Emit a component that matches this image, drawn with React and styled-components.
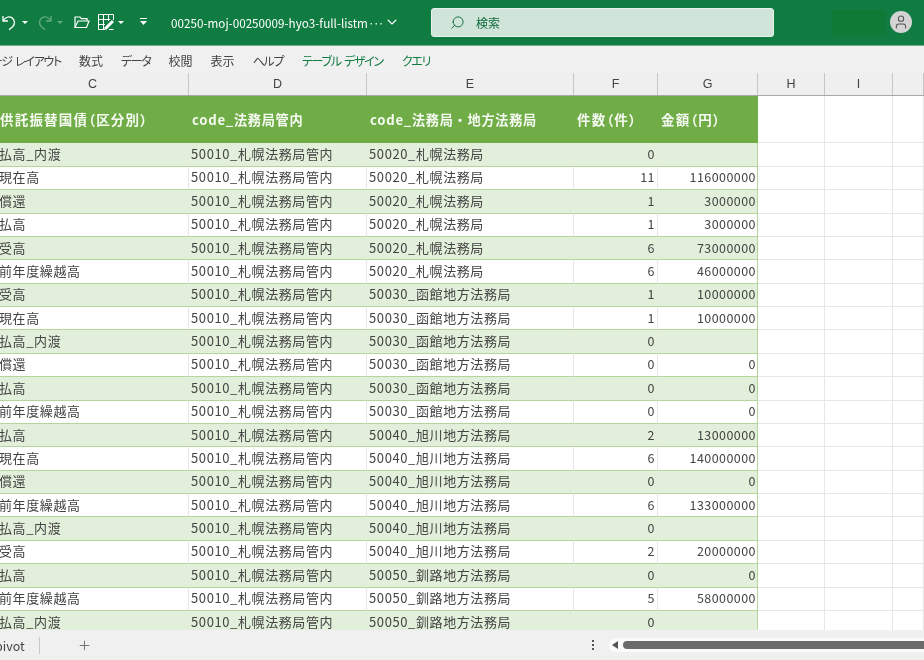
import React from 'react'
import styled, { createGlobalStyle } from 'styled-components';
import { ChevronDown, Plus, Search, User } from 'lucide-react';

const COLUMNS = '192px 178px 207px 84px 100px 67px 68px 1fr';
const ROW_HEIGHT = 23.38;

const OFFICE = '50010_札幌法務局管内';
const SAPPORO = '50020_札幌法務局';
const HAKODATE = '50030_函館地方法務局';
const ASAHIKAWA = '50040_旭川地方法務局';
const KUSHIRO = '50050_釧路地方法務局';

const rows = [
    ['払高_内渡', SAPPORO, '0', ''],
    ['現在高', SAPPORO, '11', '116000000'],
    ['償還', SAPPORO, '1', '3000000'],
    ['払高', SAPPORO, '1', '3000000'],
    ['受高', SAPPORO, '6', '73000000'],
    ['前年度繰越高', SAPPORO, '6', '46000000'],
    ['受高', HAKODATE, '1', '10000000'],
    ['現在高', HAKODATE, '1', '10000000'],
    ['払高_内渡', HAKODATE, '0', ''],
    ['償還', HAKODATE, '0', '0'],
    ['払高', HAKODATE, '0', '0'],
    ['前年度繰越高', HAKODATE, '0', '0'],
    ['払高', ASAHIKAWA, '2', '13000000'],
    ['現在高', ASAHIKAWA, '6', '140000000'],
    ['償還', ASAHIKAWA, '0', '0'],
    ['前年度繰越高', ASAHIKAWA, '6', '133000000'],
    ['払高_内渡', ASAHIKAWA, '0', ''],
    ['受高', ASAHIKAWA, '2', '20000000'],
    ['払高', KUSHIRO, '0', '0'],
    ['前年度繰越高', KUSHIRO, '5', '58000000'],
    ['払高_内渡', KUSHIRO, '0', ''],
];

const tabs = [
    { label: 'ページ レイアウト', kana: true },
    { label: '数式' },
    { label: 'データ', kana: true },
    { label: '校閲' },
    { label: '表示' },
    { label: 'ヘルプ', kana: true },
    { label: 'テーブル デザイン', kana: true, accent: true },
    { label: 'クエリ', kana: true, accent: true },
];

const App = () => (
    <Window>
        <GlobalStyle />
        <TitleBar>
            <QuickAccess>
                <svg width="17" height="18" viewBox="0 0 17 18" fill="none" stroke="currentColor" strokeWidth="1.3">
                    <path d="M2 3 V8 H7" />
                    <path d="M2.3 7.8 C4 4.2 8 3 10.8 4.6 C14 6.6 14.4 11.2 11.6 13.8 L8 16.8" />
                </svg>
                <Caret />
                <FadedIcon>
                    <svg width="17" height="18" viewBox="0 0 17 18" fill="none" stroke="currentColor" strokeWidth="1.3">
                        <path d="M15 3 V8 H10" />
                        <path d="M14.7 7.8 C13 4.2 9 3 6.2 4.6 C3 6.6 2.6 11.2 5.4 13.8 L9 16.8" />
                    </svg>
                    <Caret />
                </FadedIcon>
                <FolderSlot>
                    <svg width="16" height="14" viewBox="0 0 16 14" fill="none" stroke="currentColor" strokeWidth="1.2">
                        <path d="M1 12.5 V2 H6 L7.5 3.6 H13 V6" />
                        <path d="M1 12.5 L4 6 H15 L12.5 12.5 Z" />
                    </svg>
                </FolderSlot>
                <FormatSlot>
                    <svg width="16" height="16" viewBox="0 0 16 16" fill="none" stroke="currentColor">
                        <path d="M.5 .5 H15.5 V6 M.5 .5 V15.5 H7 M.5 5.5 H12 M.5 10.5 H7 M5.5 .5 V15.5 M10.5 .5 V7" strokeWidth="1" />
                        <path d="M7 15 L15 7" strokeWidth="3" />
                        <path d="M11 15.5 H15.5" strokeWidth="1" />
                    </svg>
                    <Caret />
                </FormatSlot>
                <CustomizeSlot>
                    <svg width="9" height="8" viewBox="0 0 9 8" fill="currentColor">
                        <rect x="1" y="0" width="7" height="1" />
                        <path d="M1 3 H8 L4.5 7 Z" />
                    </svg>
                </CustomizeSlot>
            </QuickAccess>
            <FileName>
                <span>00250-moj-00250009-hyo3-full-listm<Ellipsis>···</Ellipsis></span>
                <ChevronDown size={16} strokeWidth={1.6} />
            </FileName>
            <SearchBox>
                <MirroredSearch size={15} strokeWidth={1.5} />
                <span>検索</span>
            </SearchBox>
            <AccountBlock />
            <Avatar>
                <User size={16} strokeWidth={1.6} />
            </Avatar>
        </TitleBar>

        <Ribbon>
            {tabs.map((tab) => (
                <Tab key={tab.label} $accent={tab.accent} $kana={tab.kana}>{tab.label}</Tab>
            ))}
        </Ribbon>

        <Sheet>
            <ColumnHeaders>
                {['C', 'D', 'E', 'F', 'G', 'H', 'I', ''].map((letter, i) => (
                    <ColumnLetter key={i}>{letter}</ColumnLetter>
                ))}
            </ColumnHeaders>
            <HeaderRow>
                <HeaderCell $proportional>供託振替国債（区分別）</HeaderCell>
                <HeaderCell>code_法務局管内</HeaderCell>
                <HeaderCell>code_法務局・地方法務局</HeaderCell>
                <HeaderCell $proportional>件数（件）</HeaderCell>
                <HeaderCell $proportional>金額（円）</HeaderCell>
                <EmptyCell />
                <EmptyCell />
                <EmptyCell />
            </HeaderRow>
            {rows.map((row, i) => (
                <Row key={i} $striped={i % 2 === 0}>
                    <TextCell>{row[0]}</TextCell>
                    <TextCell>{OFFICE}</TextCell>
                    <TextCell>{row[1]}</TextCell>
                    <NumberCell>{row[2]}</NumberCell>
                    <NumberCell $last>{row[3]}</NumberCell>
                    <EmptyCell />
                    <EmptyCell />
                    <EmptyCell />
                </Row>
            ))}
        </Sheet>

        <StatusBar>
            <SheetTab>pivot</SheetTab>
            <AddSheet><Plus size={15} strokeWidth={1.4} /></AddSheet>
            <Dots>
                <i /><i /><i />
            </Dots>
            <ScrollTrack>
                <ScrollArrow />
                <ScrollThumb />
            </ScrollTrack>
        </StatusBar>
    </Window>
)

export default App;

/*
    Styles
*/
const GlobalStyle = createGlobalStyle`
    html, body {
        margin: 0;
        padding: 0;
        background: #f0f0f0;
        overflow: hidden;
    }
`;

const Window = styled.div`
    display: flex;
    flex-direction: column;
    width: 924px;
    height: 660px;
    overflow: hidden;
    font-family: "Noto Sans CJK JP", "Noto Sans", sans-serif;
    filter: blur(0.35px);
`;

const TitleBar = styled.header`
    display: flex;
    align-items: center;
    flex: none;
    height: 46px;
    box-sizing: border-box;
    padding-bottom: 1px;
    background: #107c41;
    color: #fff;
    border-bottom: 1px solid #6fae8a;
`;

const QuickAccess = styled.div`
    display: flex;
    align-items: center;
    width: 171px;
    flex: none;
    padding-left: 1px;
    box-sizing: border-box;
`;

const Caret = styled.span`
    width: 0;
    height: 0;
    margin-left: 4px;
    border-left: 3px solid transparent;
    border-right: 3px solid transparent;
    border-top: 3px solid currentColor;
`;

const FadedIcon = styled.span`
    display: flex;
    align-items: center;
    margin-left: 8px;
    opacity: 0.35;
`;

const FolderSlot = styled.span`
    display: flex;
    margin-left: 11px;
`;

const FormatSlot = styled.span`
    display: flex;
    align-items: center;
    margin-left: 8px;
`;

const CustomizeSlot = styled.span`
    display: flex;
    margin-left: 15px;
`;

const FileName = styled.div`
    display: flex;
    align-items: center;
    gap: 1px;
    width: 260px;
    flex: none;
    font-size: 11.7px;
    white-space: nowrap;
`;

const Ellipsis = styled.span`
    letter-spacing: -1.6px;
`;

const SearchBox = styled.div`
    display: flex;
    align-items: center;
    width: 343px;
    height: 29px;
    flex: none;
    box-sizing: border-box;
    padding-left: 18px;
    gap: 11px;
    background: #d0e4da;
    border: 1px solid #e8f1ec;
    border-radius: 3px;
    color: #0f6b3a;
    font-size: 12px;
`;

const MirroredSearch = styled(Search)`
    transform: scaleX(-1);
`;

const AccountBlock = styled.div`
    width: 53px;
    height: 25px;
    flex: none;
    margin-left: 58px;
    background: #0f7a35;
`;

const Avatar = styled.div`
    display: flex;
    align-items: center;
    justify-content: center;
    width: 22px;
    height: 22px;
    flex: none;
    margin-left: 5px;
    border-radius: 50%;
    background: #d4d4d4;
    color: #555;
`;

const Ribbon = styled.nav`
    display: flex;
    align-items: center;
    flex: none;
    height: 27px;
    padding-top: 2px;
    box-sizing: border-box;
    margin-left: -20px;
    gap: 18px;
    background: #f0f0f0;
    font-size: 12px;
    font-feature-settings: "palt";
    white-space: nowrap;
`;

const Tab = styled.span`
    margin-left: ${props => props.$accent ? '1px' : '0'};
    letter-spacing: ${props => props.$kana ? '-1.3px' : '0'};
    word-spacing: ${props => props.$kana ? '2px' : '0'};
    color: ${props => props.$accent ? '#107c41' : '#444'};
`;

const Sheet = styled.main`
    flex: 1;
    min-height: 0;
    overflow: hidden;
    margin-left: -3px;
    background: #fff;
`;

const ColumnHeaders = styled.div`
    display: grid;
    grid-template-columns: ${COLUMNS};
    height: 23px;
    background: #efefef;
    border-bottom: 1px solid #a8a8a8;
    box-sizing: border-box;
`;

const ColumnLetter = styled.div`
    display: flex;
    align-items: center;
    justify-content: center;
    border-right: 1px solid #c6c6c6;
    font-family: "Liberation Sans", sans-serif;
    font-size: 12.5px;
    color: #444;
`;

const HeaderRow = styled.div`
    display: grid;
    grid-template-columns: ${COLUMNS};
    height: 47.4px;
`;

const HeaderCell = styled.div`
    display: flex;
    align-items: center;
    padding: 0 0 1px 3px;
    background: #70ad47;
    color: #f6faf3;
    font-size: ${props => props.$proportional ? '13.5px' : '13.2px'};
    font-weight: 700;
    letter-spacing: ${props => props.$proportional ? '1.2px' : '0.7px'};
    white-space: nowrap;
    font-feature-settings: ${props => props.$proportional ? '"palt"' : 'normal'};
`;

const Row = styled.div`
    display: grid;
    grid-template-columns: ${COLUMNS};
    height: ${ROW_HEIGHT}px;
    --row-bg: ${props => props.$striped ? '#e2efda' : '#fff'};
    --row-line: ${props => props.$striped ? '#e2efda' : '#e6e6e6'};
`;

const TextCell = styled.div`
    display: flex;
    align-items: center;
    box-sizing: border-box;
    padding: 0 0 2px 2px;
    background: var(--row-bg);
    border-bottom: 1px solid #b4d69c;
    border-right: 1px solid var(--row-line);
    color: #444;
    font-size: 13px;
    letter-spacing: 0.6px;
    white-space: nowrap;
    overflow: hidden;
`;

const NumberCell = styled(TextCell)`
    justify-content: flex-end;
    padding: 0 ${props => props.$last ? '1px' : '2px'} 2px 0;
    font-size: 12.5px;
    letter-spacing: 0.45px;
    border-right-color: ${props => props.$last ? '#b4d69c' : 'var(--row-line)'};
`;

const EmptyCell = styled.div`
    background: #fff;
    border-bottom: 1px solid #e6e6e6;
    border-right: 1px solid #e6e6e6;
`;

const StatusBar = styled.footer`
    display: flex;
    align-items: center;
    flex: none;
    height: 30px;
    background: #f0f0f0;
    color: #444;
`;

const SheetTab = styled.div`
    display: flex;
    align-items: center;
    height: 17px;
    width: 44px;
    flex: none;
    margin-left: -5px;
    border-right: 1px solid #c8c8c8;
    font-size: 12.5px;
`;

const AddSheet = styled.div`
    display: flex;
    margin-left: 37px;
    color: #666;
`;

const Dots = styled.div`
    display: flex;
    flex-direction: column;
    gap: 2px;
    margin-left: 500px;

    i {
        display: block;
        width: 2px;
        height: 2px;
        background: #555;
    }
`;

const ScrollTrack = styled.div`
    display: flex;
    align-items: center;
    flex: 1;
    height: 14px;
    margin-left: 15px;
    padding-left: 3px;
    background: #fafafa;
    border-radius: 6px 0 0 6px;
`;

const ScrollArrow = styled.span`
    width: 0;
    height: 0;
    border-top: 4px solid transparent;
    border-bottom: 4px solid transparent;
    border-right: 6px solid #555;
`;

const ScrollThumb = styled.span`
    flex: 1;
    height: 8px;
    margin-left: 5px;
    background: #6b6b6b;
    border-radius: 4px 0 0 4px;
`;
